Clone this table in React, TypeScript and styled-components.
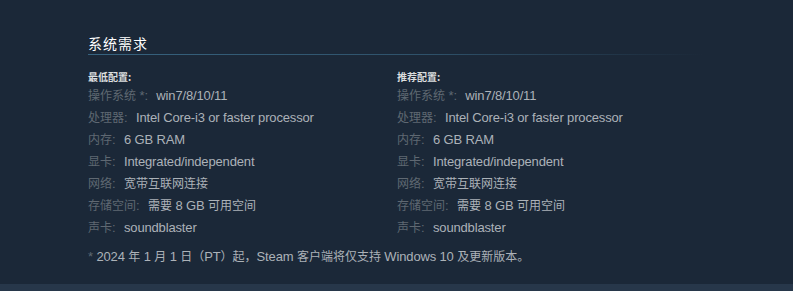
import React from 'react'
import styled, { createGlobalStyle } from 'styled-components'

const GlobalStyle = createGlobalStyle`
  html, body {
    margin: 0;
    padding: 0;
    background: #1b2838;
  }
  body {
    font-family: "Liberation Sans", Arial, "Noto Sans CJK SC", sans-serif;
  }
`

type SpecRow = { label: string; value: string }

const specs: SpecRow[] = [
  { label: '操作系统 *:', value: 'win7/8/10/11' },
  { label: '处理器:', value: 'Intel Core-i3 or faster processor' },
  { label: '内存:', value: '6 GB RAM' },
  { label: '显卡:', value: 'Integrated/independent' },
  { label: '网络:', value: '宽带互联网连接' },
  { label: '存储空间:', value: '需要 8 GB 可用空间' },
  { label: '声卡:', value: 'soundblaster' },
]

const columns = [
  { title: '最低配置:', rows: specs },
  { title: '推荐配置:', rows: specs },
]

// CJK glyphs sit a size smaller than the latin text, as on the store page
const CJK_RUN = /([\u3000-\u303f\u4e00-\u9fff\uff00-\uffef]+)/

const Mixed: React.FC<{ text: string }> = ({ text }) => (
  <>
    {text.split(CJK_RUN).map((part, i) =>
      i % 2 === 1 ? <Cjk key={i}>{part}</Cjk> : part,
    )}
  </>
)

export default function App() {
  return (
    <>
      <GlobalStyle />
      <Page>
        <Section>
          <Heading>系统需求</Heading>
          <Columns>
            {columns.map(col => (
              <Column key={col.title}>
                <ColumnTitle>{col.title}</ColumnTitle>
                <SpecList>
                  {col.rows.map(row => (
                    <SpecItem key={row.label}>
                      <Label>
                        <Mixed text={row.label} />
                      </Label>{' '}
                      <Mixed text={row.value} />
                    </SpecItem>
                  ))}
                </SpecList>
              </Column>
            ))}
          </Columns>
          <Footnote>
            <Star>*</Star>{' '}
            <Mixed text="2024 年 1 月 1 日（PT）起，Steam 客户端将仅支持 Windows 10 及更新版本。" />
          </Footnote>
        </Section>
      </Page>
      <BottomBand />
    </>
  )
}

const Page = styled.div`
  background: #1b2838;
  padding: 33px 0 16px 88px;
`

const Section = styled.div`
  width: 616px;
`

const Heading = styled.h2`
  margin: 0;
  padding-bottom: 2px;
  font-size: 14px;
  line-height: 20px;
  font-weight: normal;
  letter-spacing: 1px;
  color: #ffffff;
  font-family: "Noto Sans CJK SC", "Liberation Sans", sans-serif;
  background-image: linear-gradient(to right, #37637f 0%, rgba(55, 99, 127, 0.7) 55%, rgba(55, 99, 127, 0) 100%);
  background-repeat: no-repeat;
  background-position: left bottom;
  background-size: 100% 1px;
`

const Columns = styled.div`
  display: grid;
  grid-template-columns: 309px 307px;
  margin-top: 14px;
`

const Column = styled.div`
  display: flex;
  flex-direction: column;
`

const ColumnTitle = styled.strong`
  display: block;
  font-size: 10px;
  line-height: 16px;
  font-weight: bold;
  color: #dcdedf;
  font-family: "Noto Sans CJK SC", "Liberation Sans", sans-serif;
`

const SpecList = styled.ul`
  list-style: none;
  margin: 0;
  padding: 0;
`

const SpecItem = styled.li`
  font-size: 13px;
  line-height: 22px;
  letter-spacing: -0.15px;
  color: #acb2b8;
  white-space: nowrap;
`

const Cjk = styled.span`
  font-family: "Noto Sans CJK SC", sans-serif;
  font-size: 12px;
  line-height: 1;
  letter-spacing: 0;
`

const Label = styled.span`
  color: #5f6872;
  margin-right: 5px;
`

const Footnote = styled.p`
  margin: 7px 0 0;
  font-size: 13px;
  line-height: 22px;
  letter-spacing: -0.15px;
  color: #acb2b8;
`

const Star = styled.span`
  color: #5f6872;
`

const BottomBand = styled.div`
  height: 8px;
  background: #27374a;
`
